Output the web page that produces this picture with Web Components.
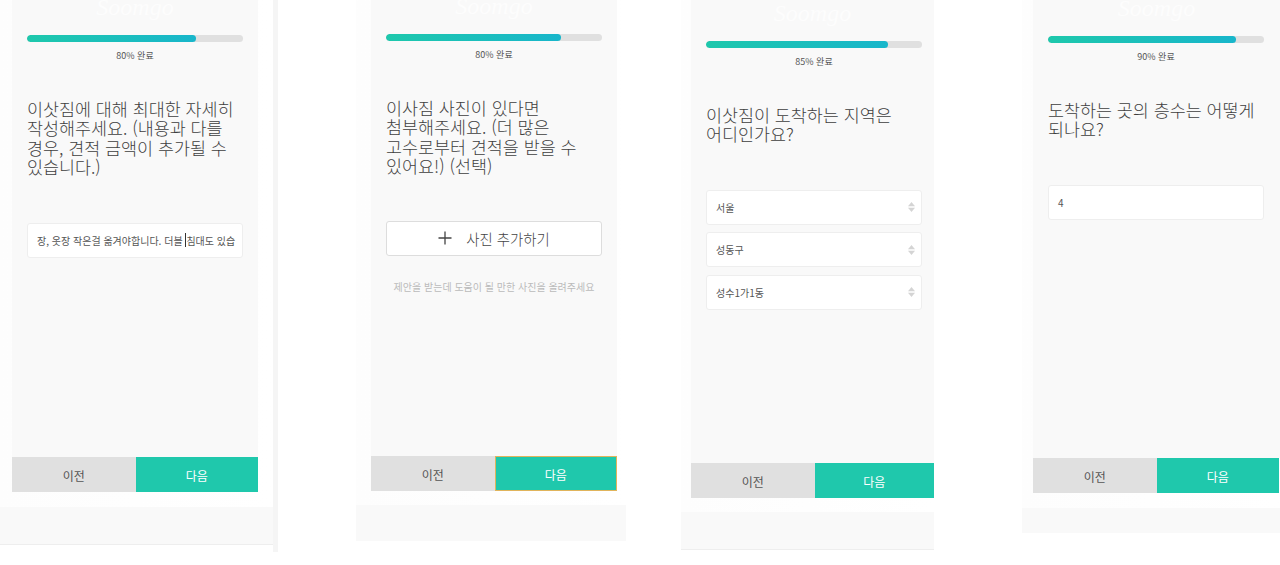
<!DOCTYPE html>
<html lang="ko">
<head>
<meta charset="utf-8">
<title>이사 견적 요청</title>
<style>
    html, body { margin: 0; height: 565px; overflow: hidden; background: #fff; }
    body { position: relative; font-family: "Noto Sans CJK KR", "Noto Sans", sans-serif; color: #555; }
    .p1 { --x: 0px; --y: -6px; --strip: 273px; --inset: 12px; --body: 246px; --gap: 15px; --strip-h: 38px; --line: #eee; }
    .p2 { --x: 356px; --y: -7px; --strip: 270px; --inset: 15px; --body: 246px; --gap: 14px; --strip-h: 36px; --line: transparent; }
    .p3 { --x: 681px; --y: 0px; --strip: 253px; --inset: 10px; --body: 243px; --gap: 14px; --strip-h: 38px; --line: #eee; }
    .p4 { --x: 1022px; --y: -5px; --strip: 258px; --inset: 11px; --body: 247px; --nav: 246px; --gap: 15px; --strip-h: 25px; --line: transparent; }
    .sep { position: absolute; left: 273px; top: 0; width: 5px; height: 552px; background: #f5f5f5; }
    .topline { position: absolute; left: 681px; top: 0; width: 253px; height: 1px; background: #ddd; }
</style>
</head>
<body>

<div class="sep"></div>
<div class="topline"></div>

<quote-panel class="p1" fill="78.2" label="80% 완료">
    <span slot="title">이삿짐에 대해 최대한 자세히 작성해주세요. (내용과 다를 경우, 견적 금액이 추가될 수 있습니다.)</span>
    <text-field caret><span>장, 옷장 작은걸 옮겨야합니다. 더블 </span><i></i><span>침대도 있습</span></text-field>
</quote-panel>

<quote-panel class="p2" fill="81" label="80% 완료" focused>
    <span slot="title">이사짐 사진이 있다면<br>첨부해주세요. (더 많은<br>고수로부터 견적을 받을 수<br>있어요!) (선택)</span>
    <add-photo hint="제안을 받는데 도움이 될 만한 사진을 올려주세요">사진 추가하기</add-photo>
</quote-panel>

<quote-panel class="p3" fill="84.2" label="85% 완료">
    <span slot="title">이삿짐이 도착하는 지역은<br>어디인가요?</span>
    <select-box>서울</select-box>
    <select-box>성동구</select-box>
    <select-box>성수1가1동</select-box>
</quote-panel>

<quote-panel class="p4" fill="87" label="90% 완료">
    <span slot="title">도착하는 곳의 층수는 어떻게<br>되나요?</span>
    <text-field>4</text-field>
</quote-panel>

<script>
class ProgressBar extends HTMLElement {
    constructor() {
        super();
        this.attachShadow({ mode: "open" });
    }

    connectedCallback() {
        this.shadowRoot.innerHTML = `
            <style>
                :host { display: block; }
                .track { height: 7px; border-radius: 4px; background: #e0e0e0; overflow: hidden; }
                .fill {
                    height: 100%;
                    border-radius: 4px;
                    background: linear-gradient(90deg, #1ec8ac, #18b6cb);
                }
                .label {
                    margin-top: 7px;
                    height: 14px;
                    line-height: 14px;
                    text-align: center;
                    font-size: 9px;
                    color: #555;
                }
            </style>
            <div class="track"><div class="fill" style="width: ${this.getAttribute("fill")}%"></div></div>
            <div class="label">${this.getAttribute("label")}</div>
        `;
    }
}

class QuotePanel extends HTMLElement {
    constructor() {
        super();
        this.attachShadow({ mode: "open" });
    }

    connectedCallback() {
        const fill = this.getAttribute("fill");
        const label = this.getAttribute("label");
        const focused = this.hasAttribute("focused") ? "focused" : "";
        this.shadowRoot.innerHTML = `
            <style>
                /* each panel is one pasted capture on the canvas */
                :host {
                    display: block;
                    position: absolute;
                    left: var(--x);
                    top: var(--y);
                    width: var(--strip);
                    background: linear-gradient(90deg, #fdfdfd, #fff);
                }
                .body {
                    box-sizing: border-box;
                    margin-left: var(--inset);
                    width: var(--body);
                    height: 463px;
                    padding: 41px 0 0 15px;
                    background: #f9f9f9;
                    position: relative;
                }
                .logo {
                    position: absolute;
                    left: 0;
                    right: 0;
                    top: 0;
                    text-align: center;
                    font: italic 24px/26px "Liberation Serif", serif;
                    color: #fdfdfd;
                }
                .col { width: 216px; }
                .title {
                    margin: 36px 0 46px;
                    font-size: 17.4px;
                    font-weight: 300;
                    line-height: 19.4px;
                    color: #3f3f3f;
                    word-break: keep-all;
                }
                .fields { display: flex; flex-direction: column; gap: 7.5px; }
                .nav {
                    display: flex;
                    margin-left: var(--inset);
                    width: var(--nav, var(--body));
                    height: 35px;
                    font-size: 12px;
                }
                .nav div {
                    display: flex;
                    align-items: center;
                    justify-content: center;
                    box-sizing: border-box;
                    padding-top: 2px;
                }
                .prev { flex: 0 0 123.5px; background: #e0e0e0; color: #555; }
                .next { flex: 1; background: #1fc8ac; color: #fff; }
                .next.focused { border: 1px solid #e0b45c; }
                .strip {
                    box-sizing: border-box;
                    margin-top: var(--gap);
                    height: var(--strip-h);
                    background: #f9f9f9;
                    border-bottom: 1px solid var(--line);
                }
            </style>
            <div class="body">
                <div class="logo">Soomgo</div>
                <div class="col">
                    <progress-bar fill="${fill}" label="${label}"></progress-bar>
                    <div class="title"><slot name="title"></slot></div>
                    <div class="fields"><slot></slot></div>
                </div>
            </div>
            <div class="nav">
                <div class="prev">이전</div>
                <div class="next ${focused}">다음</div>
            </div>
            <div class="strip"></div>
        `;
    }
}

class TextField extends HTMLElement {
    constructor() {
        super();
        this.attachShadow({ mode: "open" });
        this.shadowRoot.innerHTML = `
            <style>
                :host {
                    display: flex;
                    align-items: center;
                    box-sizing: border-box;
                    height: 35px;
                    padding: 0 9px;
                    background: #fff;
                    border: 1px solid #eee;
                    border-radius: 3px;
                    font-size: 10px;
                    color: #555;
                    white-space: nowrap;
                    overflow: hidden;
                }
                ::slotted(i) {
                    display: inline-block;
                    flex: none;
                    width: 1px;
                    height: 14px;
                    background: #333;
                }
                ::slotted(span) { white-space: pre; flex: none; }
            </style>
            <slot></slot>
        `;
    }
}

class SelectBox extends HTMLElement {
    constructor() {
        super();
        this.attachShadow({ mode: "open" });
        this.shadowRoot.innerHTML = `
            <style>
                :host {
                    display: flex;
                    align-items: center;
                    justify-content: space-between;
                    box-sizing: border-box;
                    height: 35px;
                    padding: 0 6px 0 9px;
                    background: #fff;
                    border: 1px solid #eee;
                    border-radius: 3px;
                    font-size: 10px;
                    color: #555;
                }
                svg { display: block; }
            </style>
            <slot></slot>
            <svg width="7" height="10" viewBox="0 0 7 10" fill="#d4d4d4">
                <path d="M3.5 0 L7 4.2 H0 Z"/>
                <path d="M3.5 10 L7 5.8 H0 Z"/>
            </svg>
        `;
    }
}

class AddPhoto extends HTMLElement {
    constructor() {
        super();
        this.attachShadow({ mode: "open" });
    }

    connectedCallback() {
        this.shadowRoot.innerHTML = `
            <style>
                :host { display: block; margin-top: -1px; }
                .btn {
                    display: flex;
                    align-items: center;
                    justify-content: center;
                    gap: 14px;
                    box-sizing: border-box;
                    height: 35.5px;
                    background: #fff;
                    border: 1.5px solid #ddd;
                    border-radius: 3px;
                    font-size: 14.4px;
                    font-weight: 300;
                    color: #444;
                }
                svg { display: block; }
                .hint {
                    margin-top: 24px;
                    text-align: center;
                    line-height: 14px;
                    font-size: 10px;
                    color: #bbb;
                    white-space: nowrap;
                }
            </style>
            <div class="btn">
                <svg width="14" height="14" viewBox="0 0 14 14" stroke="#444" stroke-width="1.3" fill="none">
                    <path d="M7 0.5 V13.5 M0.5 7 H13.5"/>
                </svg>
                <span><slot></slot></span>
            </div>
            <div class="hint">${this.getAttribute("hint")}</div>
        `;
    }
}

customElements.define("progress-bar", ProgressBar);
customElements.define("text-field", TextField);
customElements.define("select-box", SelectBox);
customElements.define("add-photo", AddPhoto);
customElements.define("quote-panel", QuotePanel);
</script>
</body>
</html>
